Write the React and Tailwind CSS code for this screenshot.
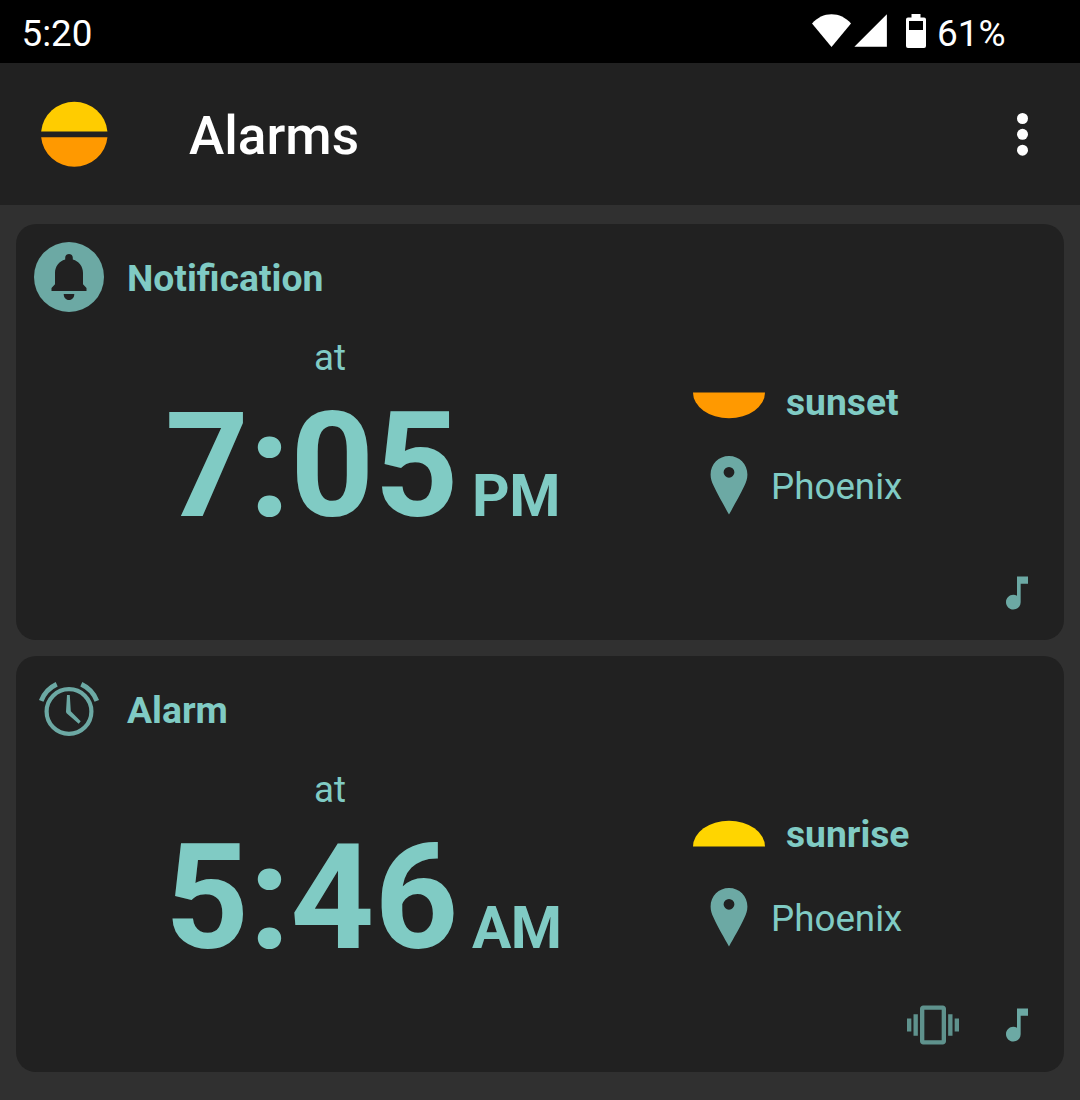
function WifiIcon() {
  return (
    <svg width="39" height="34" viewBox="0 0 39 34" fill="#fff">
      <path d="M0 9.5C5.5 3.5 12 .3 19.5.3S33.500 3.500 39 9.500L19.500 33Z" />
    </svg>
  );
}

function SignalIcon() {
  return (
    <svg className="ml-[3px]" width="33" height="34" viewBox="0 0 33 34" fill="#fff">
      <path d="M32.900.300V32.800H.400Z" />
    </svg>
  );
}

function BatteryIcon() {
  return (
    <svg className="ml-[19px]" width="20" height="34" viewBox="0 0 20 34" fill="#fff" fillRule="evenodd">
      <path d="M5.500 0h9v3.500H18a2 2 0 0 1 2 2V32a2 2 0 0 1-2 2H2a2 2 0 0 1-2-2V5.500a2 2 0 0 1 2-2h3.500ZM3 7v9h14V7Z" />
    </svg>
  );
}

function SunLogo() {
  return (
    <svg width="68" height="66" viewBox="0 0 68 66">
      <path d="M.150 30.400a33.300 32.700 0 0 1 66.300 0Z" fill="#fc0" />
      <path d="M.150 36.200a33.300 32.700 0 0 0 66.300 0Z" fill="#f90" />
    </svg>
  );
}

function BellIcon() {
  return (
    <svg width="70" height="70" viewBox="0 0 70 70">
      <circle cx="35" cy="35" r="35" fill="#6ca9a4" />
      <path
        d="M35 12c-2.300 0-3.800 1.600-3.800 3.800v1.700C25 19.200 21 24.500 21 31v11.300L17.500 46V49h35v-3l-3.500-3.700V31c0-6.500-4-11.800-10.200-13.500v-1.700c0-2.200-1.500-3.800-3.800-3.800ZM29.700 52h10.600c0 3.500-2.100 6-5.300 6s-5.300-2.500-5.300-6Z"
        fill="#212121"
      />
    </svg>
  );
}

function AlarmIcon() {
  return (
    <svg width="70" height="70" viewBox="0 0 70 70" fill="none" stroke="#6ca9a4" strokeWidth="4.200">
      <circle cx="35" cy="37.500" r="22.400" />
      <path d="M7.200 26.800A30 30 0 0 1 22.700 10.200M62.800 26.800A30 30 0 0 0 47.300 10.200" strokeWidth="4.800" />
      <path d="M33 21h2.800l1 16.300L46.700 47.200l-2 2.600L32.600 39.200a2 2 0 0 1-.600-1.600Z" fill="#6ca9a4" stroke="none" />
    </svg>
  );
}

function HalfSun({ rising }) {
  return rising ? (
    <svg className="mb-[4px]" width="72" height="27" viewBox="0 0 72 27">
      <path d="M0 26.600a36 25.800 0 0 1 72 0Z" fill="#ffd500" />
    </svg>
  ) : (
    <svg className="mt-[4px]" width="72" height="27" viewBox="0 0 72 27">
      <path d="M0 .400a36 25.800 0 0 0 72 0Z" fill="#f90" />
    </svg>
  );
}

function PinIcon() {
  return (
    <svg width="38" height="60" viewBox="0 0 38 60" fill="#6ca9a4" fillRule="evenodd">
      <path d="M19 0C8.800 0 .600 8.100.600 18.500c0 4.200 1.200 7.300 3 11.300C8 39.400 14.500 50.300 19 58.600 23.500 50.300 30 39.400 34.400 29.800c1.800-4 3-7.100 3-11.300C37.400 8.100 29.200 0 19 0Zm0 10.900a5.400 5.400 0 1 1 0 10.800 5.400 5.400 0 0 1 0-10.800Z" />
    </svg>
  );
}

function VibrateIcon() {
  return (
    <svg width="52" height="52" viewBox="0 0 24 24" fill="#5f928d">
      <path d="M0 15h2V9H0v6zm3 2h2V7H3v10zm19-8v6h2V9h-2zm-3 8h2V7h-2v10zM16.500 3h-9C6.670 3 6 3.670 6 4.500v15c0 .83.67 1.500 1.500 1.500h9c.83 0 1.500-.67 1.500-1.500v-15c0-.83-.67-1.500-1.500-1.500zM16 19H8V5h8v14z" />
    </svg>
  );
}

function NoteIcon() {
  return (
    <svg width="44" height="44" viewBox="0 0 24 24" fill="#6ca9a4">
      <path d="M12 3v10.550c-.59-.34-1.270-.55-2-.55-2.210 0-4 1.790-4 4s1.790 4 4 4 4-1.790 4-4V7h4V3h-6z" />
    </svg>
  );
}

function AlarmCard({ icon, title, time, suffix, event, rising, place, vibrate }) {
  return (
    <section className="flex h-[416px] flex-col rounded-[20px] bg-[#212121] text-[#80cbc4]">
      <div className="mt-[18px] flex h-[70px] items-center pl-[18px]">
        {icon}
        <h2 className="ml-[23px] mt-px text-[37.300px] font-bold leading-[42px]">{title}</h2>
      </div>
      <div className="flex h-[242px] pt-[24px]">
        <div className="w-[677px] pl-[149px]">
          <div className="w-[330px] text-center text-[36.750px] leading-[43px]">at</div>
          <div className="mt-[7px] flex items-baseline whitespace-nowrap font-bold">
            <span className="text-[146.500px] leading-[160px]">{time}</span>
            <span className="ml-[13.500px] text-[58.500px] leading-[64px] tracking-[-0.5px]">{suffix}</span>
          </div>
        </div>
        <div className="flex flex-col pt-[46px]">
          <div className="flex h-[42px] items-center">
            <HalfSun rising={rising} />
            <span className="-mt-[2px] ml-[21px] text-[37.200px] font-bold leading-[42px]">{event}</span>
          </div>
          <div className="mt-[32px] flex h-[60px] items-center pl-[17px]">
            <PinIcon />
            <span className="ml-[23px] mt-[2px] text-[36.750px] leading-[42px]">{place}</span>
          </div>
        </div>
      </div>
      <div className="flex h-[86px] items-center justify-end gap-9 pb-[8px] pr-[25px]">
        {vibrate && <VibrateIcon />}
        <NoteIcon />
      </div>
    </section>
  );
}

export default function App() {
  return (
    <div className="h-[1100px] w-[1080px] overflow-hidden bg-[#303030] font-['Roboto',sans-serif]">
      <div className="flex h-[63px] bg-black pl-[21.500px] text-white">
        <span className="mt-[12px] w-[790.500px] text-[36.750px] leading-[43px]">5:20</span>
        <div className="flex pt-[14px]">
          <WifiIcon />
          <SignalIcon />
          <BatteryIcon />
          <span className="-mt-[2px] ml-[11px] text-[37px] leading-[43px]">61%</span>
        </div>
      </div>
      <header className="flex h-[142px] items-center bg-[#212121] pl-[41px] pr-[52px] text-white">
        <SunLogo />
        <h1 className="ml-[80px] mt-[4px] text-[53.200px] font-medium leading-[60px]">Alarms</h1>
        <svg className="ml-auto" width="11" height="44" viewBox="0 0 11 44" fill="#fff">
          <circle cx="5.500" cy="6.500" r="5.500" />
          <circle cx="5.500" cy="22.300" r="5.500" />
          <circle cx="5.500" cy="38.200" r="5.500" />
        </svg>
      </header>
      <main className="flex flex-col gap-4 px-4 pt-[19px]">
        <AlarmCard icon={<BellIcon />} title="Notification" time="7:05" suffix="PM" event="sunset" place="Phoenix" />
        <AlarmCard icon={<AlarmIcon />} title="Alarm" time="5:46" suffix="AM" event="sunrise" rising place="Phoenix" vibrate />
      </main>
    </div>
  );
}
